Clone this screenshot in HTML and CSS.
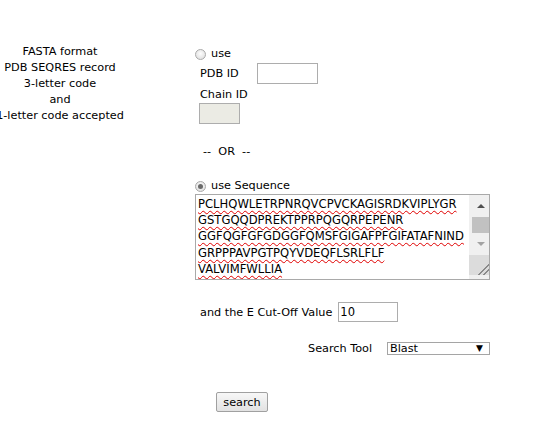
FILE: index.html
```html
<!DOCTYPE html>
<html lang="en">

<head>
    <meta charset="UTF-8">
    <title>Sequence Search</title>
    <link rel="stylesheet" href="styles.css">
</head>

<body>
    <form class="search-form" onsubmit="return false">
        <div class="help-col">
            <span>FASTA format</span>
            <span>PDB SEQRES record</span>
            <span>3-letter code</span>
            <span>and</span>
            <span>1-letter code accepted</span>
        </div>

        <div class="input-col">
            <label class="row row-use">
                <span class="radio"></span>
                <span>use</span>
            </label>

            <div class="row row-pdb">
                <span class="field-label">PDB ID</span>
                <input type="text" class="text-input pdb-input">
            </div>

            <div class="chain-label">Chain ID</div>
            <input type="text" class="text-input chain-input" disabled>

            <div class="or-text">--&nbsp; OR &nbsp;--</div>

            <label class="row row-seq">
                <span class="radio checked"></span>
                <span>use Sequence</span>
            </label>

            <div class="seq-box">
                <div class="seq-text">
                    <div><span class="misspelled">PCLHQWLETRPNRQVCPVCKAGISRDKVIPLYGR</span></div>
                    <div><span class="misspelled">GSTGQQDPREKTPPRPQGQRPEPENR</span></div>
                    <div><span class="misspelled">GGFQGFGFGDGGFQMSFGIGAFPFGIFATAFNIND</span></div>
                    <div><span class="misspelled">GRPPPAVPGTPQYVDEQFLSRLFLF</span></div>
                    <div><span class="misspelled">VALVIMFWLLIA</span></div>
                </div>
                <div class="scrollbar">
                    <span class="arrow-up"></span>
                    <span class="thumb"></span>
                    <span class="arrow-down"></span>
                    <span class="resizer"></span>
                </div>
            </div>

            <div class="row row-evalue">
                <span>and the E Cut-Off Value</span>
                <input type="text" class="text-input evalue-input" value="10">
            </div>

            <div class="row row-tool">
                <span class="tool-label">Search Tool</span>
                <div class="select-box">
                    <span>Blast</span>
                    <span class="select-arrow">&#9660;</span>
                </div>
            </div>

            <button type="submit" class="search-button">search</button>
        </div>
    </form>
</body>

</html>
```

FILE: styles.css
```css
body {
    margin: 0;
    font-family: "DejaVu Sans", Verdana, sans-serif;
    font-size: 11.25px;
    line-height: 16px;
    color: #000;
    background: #fff;
}

.search-form {
    display: flex;
}

.help-col {
    width: 120px;
    padding-top: 44px;
    display: flex;
    flex-direction: column;
    align-items: center;
    white-space: nowrap;
    flex-shrink: 0;
}

.input-col {
    margin-left: 75px;
    display: flex;
    flex-direction: column;
    align-items: flex-start;
}

.row {
    display: flex;
    align-items: center;
    white-space: nowrap;
}

.row-use {
    margin-top: 46px;
    height: 16px;
}

.radio {
    width: 11px;
    height: 11px;
    box-sizing: border-box;
    border: 1px solid #a9a9a9;
    border-radius: 50%;
    background: radial-gradient(circle at 50% 40%, #fdfdfd 0, #e4e4e4 70%);
    margin-right: 5px;
    position: relative;
}

.radio.checked::after {
    content: "";
    position: absolute;
    left: 2px;
    top: 2px;
    width: 5px;
    height: 5px;
    border-radius: 50%;
    background: #6a6a6a;
}

.row-pdb {
    margin-top: 1px;
    padding-left: 5px;
    height: 21px;
}

.field-label {
    width: 57px;
    padding-top: 1px;
}

.text-input {
    box-sizing: border-box;
    height: 21px;
    margin: 0;
    padding: 0 2px;
    border: 1px solid #adadad;
    background: #fff;
    font-family: inherit;
    font-size: 11.5px;
    color: #000;
    outline: none;
}

.pdb-input {
    width: 61px;
}

.chain-label {
    margin-top: 3px;
    padding-left: 5px;
}

.chain-input {
    width: 41px;
    margin-top: 0;
    margin-left: 4px;
    background: #ebebe4;
}

.or-text {
    margin-top: 20px;
    padding-left: 8px;
}

.row-seq {
    margin-top: 18px;
    height: 16px;
}

.seq-box {
    width: 295px;
    height: 86px;
    box-sizing: border-box;
    border: 1px solid #a9a9a9;
    display: flex;
    overflow: hidden;
}

.seq-text {
    flex: 1;
    padding: 1px 0 0 2px;
    font-size: 11.6px;
    line-height: 16.2px;
    white-space: nowrap;
    overflow: hidden;
}

.misspelled {
    text-decoration: underline wavy #e00000;
    text-decoration-thickness: 1px;
    text-underline-offset: 2px;
}

.scrollbar {
    width: 20px;
    background: #f0f0f0;
    display: flex;
    flex-direction: column;
    align-items: flex-end;
}

.arrow-up,
.arrow-down {
    width: 0;
    height: 0;
    border-left: 4.5px solid transparent;
    border-right: 4.5px solid transparent;
    margin-right: 4px;
}

.arrow-up {
    margin-top: 9px;
    border-bottom: 4px solid #505050;
}

.arrow-down {
    margin-top: 9px;
    border-top: 4px solid #a3a3a3;
}

.thumb {
    width: 17px;
    height: 16px;
    margin-top: 9px;
    background: #c1c1c1;
}

.resizer {
    width: 20px;
    height: 20px;
    margin-top: 9px;
    background:
        linear-gradient(135deg, transparent 0 72%, #8a8a8a 72% 76%, transparent 76% 84%, #8a8a8a 84% 88%, transparent 88%),
        #dcdcdc;
}

.row-evalue {
    margin-top: 22px;
    padding-left: 5px;
    height: 20px;
}

.row-evalue span {
    margin-right: 6px;
    padding-top: 1px;
}

.evalue-input {
    width: 60px;
    height: 20px;
    padding-left: 1px;
}

.row-tool {
    margin-top: 18px;
    height: 16px;
    padding-left: 113px;
}

.tool-label {
    width: 79px;
    padding-top: 1px;
}

.select-box {
    width: 103px;
    height: 13px;
    box-sizing: border-box;
    border: 1px solid #a5a5a5;
    display: flex;
    align-items: center;
    justify-content: space-between;
    padding: 0 6px 0 2px;
    line-height: 11px;
}

.select-arrow {
    font-size: 9px;
}

.search-button {
    margin-top: 36px;
    margin-left: 21px;
    width: 52px;
    height: 20px;
    padding: 0;
    border: 1px solid #a0a0a0;
    border-radius: 2px;
    background: linear-gradient(#f7f7f7, #e2e2e2);
    font-family: inherit;
    font-size: 11.25px;
    color: #000;
}
```
